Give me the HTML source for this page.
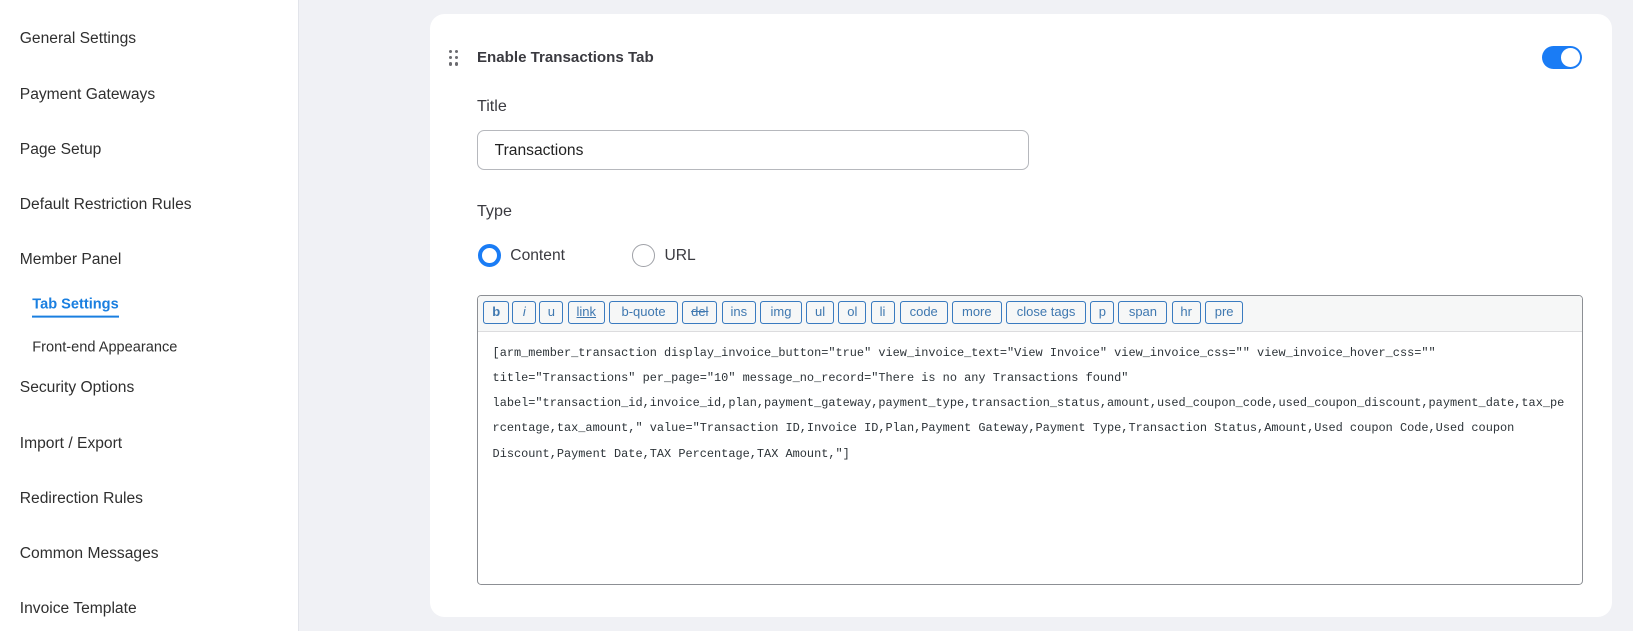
<!DOCTYPE html>
<html><head><meta charset="utf-8"><style>
html,body{margin:0;padding:0;background:#f0f1f5;overflow:hidden}
#w{zoom:1.04145;width:1568px;height:606px;position:relative;font-family:"Liberation Sans",sans-serif;color:#2c2c2c}
#side{position:absolute;left:0;top:0;width:286px;height:606px;background:#fff;border-right:1px solid #e2e4ea}
.it{position:absolute;left:19px;font-size:15px;color:#2f2f2f;transform:translateY(-40%)}
.sub{left:31px;font-size:14px}
.act{color:#1a7fe0;font-weight:bold;border-bottom:2px solid #1a7fe0;padding-bottom:3px;transform:translateY(-35%)}
#card{position:absolute;left:413px;top:13px;width:1135px;height:579px;background:#fff;border-radius:14px}
.abs{position:absolute}
.dots{left:431px;top:48px;width:10px;height:15px}
.dots i{position:absolute;width:3px;height:3px;border-radius:50%;background:#6b6b70}
.h{left:458px;top:47px;font-size:14.5px;font-weight:bold;color:#3a3a40}
.tog{left:1481px;top:44px;width:38px;height:22px;border-radius:11px;background:#1a7cf5}
.tog b{position:absolute;right:2px;top:2px;width:18px;height:18px;border-radius:50%;background:#fff}
.lbl{left:458px;font-size:15.5px;color:#3a3a40}
.inp{left:458px;top:125px;width:528px;height:36px;border:1px solid #b6b8bd;border-radius:7px}
.inp span{position:absolute;left:16px;top:10px;font-size:15px;color:#222}
.rad{width:22px;height:22px;border-radius:50%;box-sizing:border-box}
.ta{left:458px;top:283px;width:1060px;height:277px;border:1px solid #8c8f94;border-radius:4px;overflow:hidden}
.tb{height:34px;background:#f6f7f7;border-bottom:1px solid #dcdcde;position:relative}
.btn{position:absolute;top:5px;height:22px;border:1px solid #3a7bc0;border-radius:3px;box-sizing:border-box;color:#3f78b0;font-size:12.5px;line-height:20px;text-align:center;background:#f6f7f7}
pre{margin:0;position:absolute;left:14px;top:43px;font-family:"Liberation Mono",monospace;font-size:11.45px;line-height:24.3px;color:#2c3338}
</style></head><body><div id="w">
<div id="side">
<div class="it" style="top:36px">General Settings</div>
<div class="it" style="top:89px">Payment Gateways</div>
<div class="it" style="top:142px">Page Setup</div>
<div class="it" style="top:195px">Default Restriction Rules</div>
<div class="it" style="top:248px">Member Panel</div>
<div class="it sub act" style="top:292px">Tab Settings</div>
<div class="it sub" style="top:332px">Front-end Appearance</div>
<div class="it" style="top:371px">Security Options</div>
<div class="it" style="top:424px">Import / Export</div>
<div class="it" style="top:477px">Redirection Rules</div>
<div class="it" style="top:530px">Common Messages</div>
<div class="it" style="top:583px">Invoice Template</div>
</div>
<div id="card"></div>
<div class="abs dots"><i style="left:0;top:0"></i><i style="left:6px;top:0"></i><i style="left:0;top:6px"></i><i style="left:6px;top:6px"></i><i style="left:0;top:12px"></i><i style="left:6px;top:12px"></i></div>
<div class="abs h">Enable Transactions Tab</div>
<div class="abs tog"><b></b></div>
<div class="abs lbl" style="top:93px">Title</div>
<div class="abs inp"><span>Transactions</span></div>
<div class="abs lbl" style="top:194px">Type</div>
<div class="abs rad" style="left:459px;top:234px;border:4px solid #1a7cf5"></div>
<div class="abs lbl" style="left:490px;top:237px;font-size:15px">Content</div>
<div class="abs rad" style="left:607px;top:234px;border:1px solid #a0a2a8"></div>
<div class="abs lbl" style="left:638px;top:237px;font-size:15px">URL</div>
<div class="abs ta"><div class="tb">
<div class="btn" style="left:5px;width:25px;font-weight:bold">b</div>
<div class="btn" style="left:33px;width:23px;font-style:italic">i</div>
<div class="btn" style="left:59px;width:23px">u</div>
<div class="btn" style="left:86px;width:36px;text-decoration:underline">link</div>
<div class="btn" style="left:126px;width:66px">b-quote</div>
<div class="btn" style="left:196px;width:34px;text-decoration:line-through">del</div>
<div class="btn" style="left:234px;width:33px">ins</div>
<div class="btn" style="left:271px;width:40px">img</div>
<div class="btn" style="left:315px;width:27px">ul</div>
<div class="btn" style="left:346px;width:27px">ol</div>
<div class="btn" style="left:377px;width:23px">li</div>
<div class="btn" style="left:405px;width:46px">code</div>
<div class="btn" style="left:455px;width:48px">more</div>
<div class="btn" style="left:507px;width:77px">close tags</div>
<div class="btn" style="left:588px;width:23px">p</div>
<div class="btn" style="left:615px;width:47px">span</div>
<div class="btn" style="left:666px;width:28px">hr</div>
<div class="btn" style="left:698px;width:37px">pre</div>
</div>
<pre>[arm_member_transaction display_invoice_button="true" view_invoice_text="View Invoice" view_invoice_css="" view_invoice_hover_css=""
title="Transactions" per_page="10" message_no_record="There is no any Transactions found"
label="transaction_id,invoice_id,plan,payment_gateway,payment_type,transaction_status,amount,used_coupon_code,used_coupon_discount,payment_date,tax_pe
rcentage,tax_amount," value="Transaction ID,Invoice ID,Plan,Payment Gateway,Payment Type,Transaction Status,Amount,Used coupon Code,Used coupon
Discount,Payment Date,TAX Percentage,TAX Amount,"]</pre>
</div>
</div></body></html>
